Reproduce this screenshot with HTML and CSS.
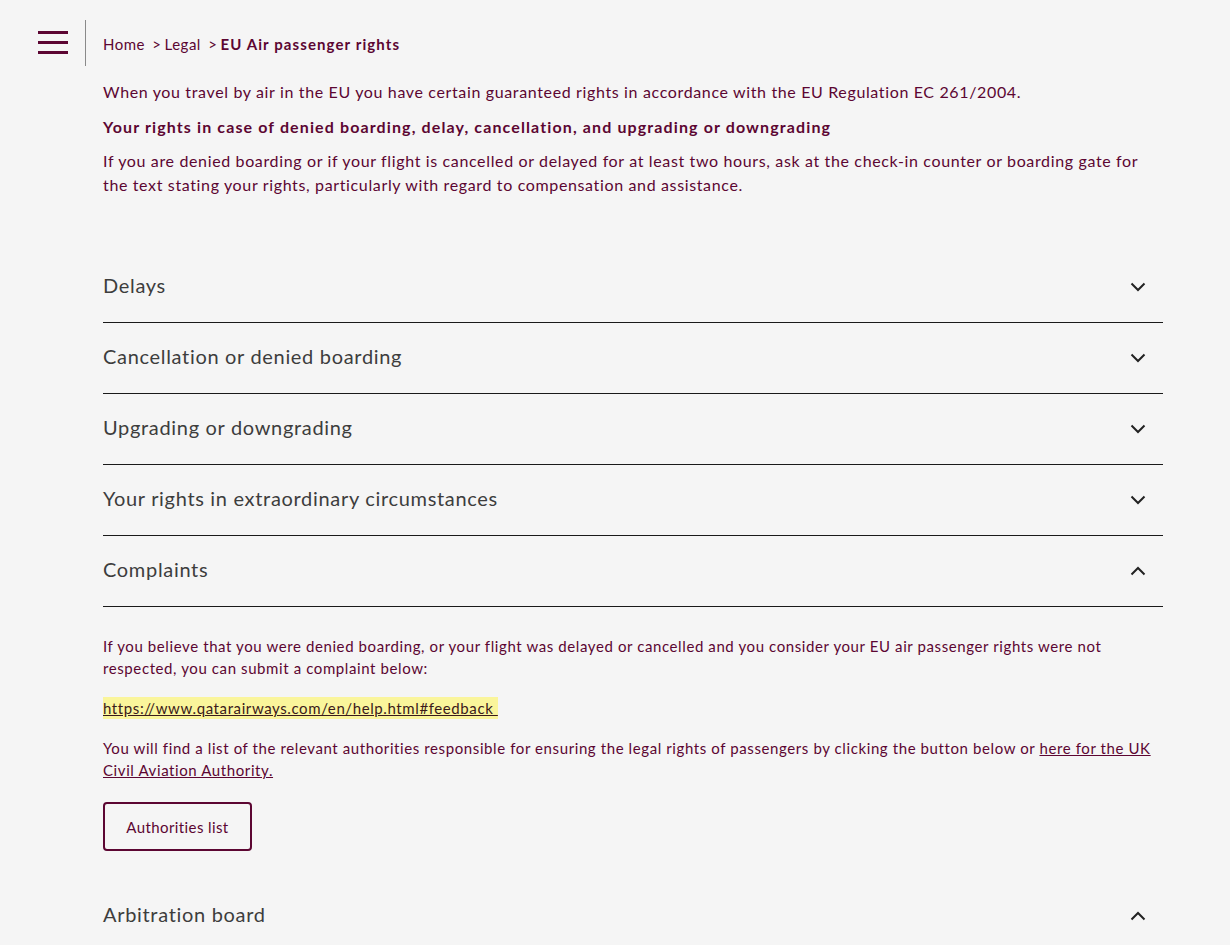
FILE: index.html
```html
<!DOCTYPE html>
<html lang="en">
<head>
<meta charset="utf-8">
<title>EU Air passenger rights</title>
<link rel="stylesheet" href="styles.css">
</head>
<body>
<header class="topbar">
  <button class="menu" aria-label="Menu">
    <span></span><span></span><span></span>
  </button>
  <div class="divider"></div>
  <nav class="crumbs">
    <a href="#">Home</a>
    <span class="sep">&gt;</span><a href="#">Legal</a>
    <span class="sep">&gt;</span><strong>EU Air passenger rights</strong>
  </nav>
</header>
<main class="content">
  <section class="intro">
    <p>When you travel by air in the EU you have certain guaranteed rights in accordance with the EU Regulation EC 261/2004.</p>
    <p class="lead">Your rights in case of denied boarding, delay, cancellation, and upgrading or downgrading</p>
    <p>If you are denied boarding or if your flight is cancelled or delayed for at least two hours, ask at the check-in counter or boarding gate for the text stating your rights, particularly with regard to compensation and assistance.</p>
  </section>
  <section class="accordion">
    <div class="item">
      <div class="head"><span>Delays</span><svg class="chev" viewBox="0 0 16 10"><path d="M1.5 1.5 L8 8 L14.5 1.5"/></svg></div>
    </div>
    <div class="item">
      <div class="head"><span>Cancellation or denied boarding</span><svg class="chev" viewBox="0 0 16 10"><path d="M1.5 1.5 L8 8 L14.5 1.5"/></svg></div>
    </div>
    <div class="item">
      <div class="head"><span>Upgrading or downgrading</span><svg class="chev" viewBox="0 0 16 10"><path d="M1.5 1.5 L8 8 L14.5 1.5"/></svg></div>
    </div>
    <div class="item">
      <div class="head"><span>Your rights in extraordinary circumstances</span><svg class="chev" viewBox="0 0 16 10"><path d="M1.5 1.5 L8 8 L14.5 1.5"/></svg></div>
    </div>
    <div class="item open">
      <div class="head"><span>Complaints</span><svg class="chev" viewBox="0 0 16 10"><path d="M1.5 8.5 L8 2 L14.5 8.5"/></svg></div>
      <div class="body">
        <p>If you believe that you were denied boarding, or your flight was delayed or cancelled and you consider your EU air passenger rights were not respected, you can submit a complaint below:</p>
        <p><a class="hl" href="#">https://www.qatarairways.com/en/help.html#feedback&nbsp;</a></p>
        <p>You will find a list of the relevant authorities responsible for ensuring the legal rights of passengers by clicking the button below or <a href="#">here for the UK Civil Aviation Authority.</a></p>
        <button class="btn">Authorities list</button>
      </div>
    </div>
    <div class="item last">
      <div class="head"><span>Arbitration board</span><svg class="chev" viewBox="0 0 16 10"><path d="M1.5 8.5 L8 2 L14.5 8.5"/></svg></div>
    </div>
  </section>
</main>
</body>
</html>
```

FILE: styles.css
```css
html, body {
  margin: 0;
  padding: 0;
  background: #f5f5f5;
}
body {
  font-family: "Lato", "Open Sans", sans-serif;
  color: #5c0632;
  height: 945px;
  overflow: hidden;
}
.topbar {
  display: flex;
  align-items: flex-start;
  padding: 20px 0 0 38px;
}
.menu {
  margin: 11px 0 0 0;
  padding: 0;
  border: 0;
  background: none;
  width: 30px;
  display: flex;
  flex-direction: column;
  gap: 7px;
}
.menu span {
  display: block;
  height: 3px;
  width: 30px;
  background: #5c0632;
}
.divider {
  width: 1px;
  height: 46px;
  background: #8a8a8a;
  margin-left: 17px;
}
.crumbs {
  margin: 14px 0 0 17px;
  font-size: 15px;
  line-height: 20px;
  letter-spacing: 0.5px;
}
.crumbs a {
  color: #5c0632;
  text-decoration: none;
}
.crumbs .sep {
  margin: 0 3px 0 3px;
}
.crumbs strong {
  font-weight: 700;
  letter-spacing: 1.1px;
}
.content {
  padding: 0 67px 0 103px;
}
.intro {
  margin-top: 14px;
}
.intro p {
  margin: 0 0 10px;
  font-size: 16px;
  line-height: 24px;
  letter-spacing: 0.64px;
}
.intro .lead {
  font-weight: 700;
  letter-spacing: 1.12px;
  margin-top: 11px;
}
.accordion {
  margin-top: 55px;
}
.item {
  border-bottom: 1px solid #1a1a1a;
}
.item.last {
  border-bottom: 0;
}
.head {
  height: 70px;
  display: flex;
  align-items: center;
  justify-content: space-between;
  font-size: 20px;
  letter-spacing: 0.68px;
  color: #3d3d3d;
}
.head span {
  margin-top: -4px;
}
.chev {
  width: 16px;
  height: 10px;
  margin-right: 17px;
  fill: none;
  stroke: #222;
  stroke-width: 2;
}
.item.open {
  border-bottom: 0;
}
.item.open .head {
  border-bottom: 1px solid #1a1a1a;
}
.body {
  padding: 28px 0 30px;
}
.body p {
  margin: 0 0 18px;
  font-size: 15px;
  line-height: 22px;
  letter-spacing: 0.6px;
}
.body a {
  color: #5c0632;
  text-decoration: underline;
}
.body a.hl {
  background: #faf59b;
  color: #3a1a1a;
  padding: 2px 0;
}
.btn {
  font-family: inherit;
  font-size: 15px;
  letter-spacing: 0.4px;
  color: #5c0632;
  background: transparent;
  border: 2px solid #5c0632;
  border-radius: 4px;
  width: 149px;
  height: 49px;
  margin-top: 3px;
}
```
